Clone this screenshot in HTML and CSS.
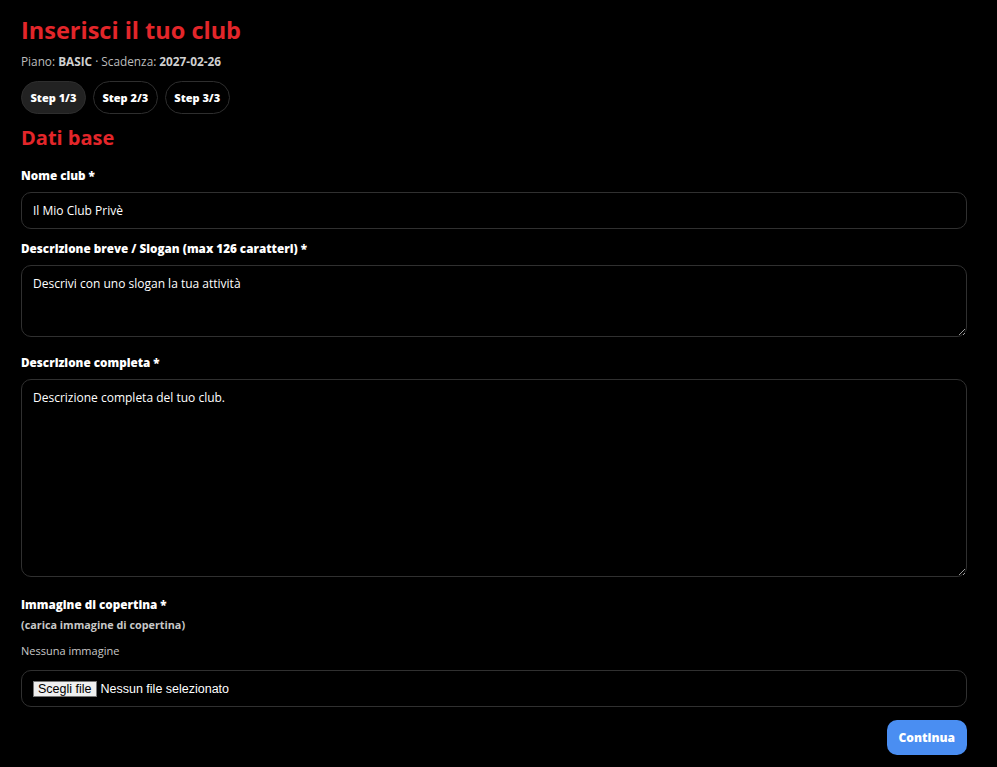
FILE: index.html
```html
<!DOCTYPE html>
<html lang="it">
<head>
<meta charset="utf-8">
<title>Inserisci il tuo club</title>
<link rel="stylesheet" href="styles.css">
</head>
<body>
<main class="page">
  <h1 class="title">Inserisci il tuo club</h1>
  <p class="meta">Piano: <b>BASIC</b> · Scadenza: <b>2027-02-26</b></p>
  <div class="steps">
    <span class="step active">Step 1/3</span>
    <span class="step">Step 2/3</span>
    <span class="step">Step 3/3</span>
  </div>
  <h2 class="section">Dati base</h2>
  <form class="form">
    <label class="label">Nome club *</label>
    <input class="field" type="text" value="Il Mio Club Privè">
    <label class="label after-input">Descrizione breve / Slogan (max 126 caratteri) *</label>
    <textarea class="field area-short" placeholder="Descrivi con uno slogan la tua attività"></textarea>
    <label class="label after-area">Descrizione completa *</label>
    <textarea class="field area-long" placeholder="Descrizione completa del tuo club."></textarea>
    <label class="label label-img">Immagine di copertina *</label>
    <p class="sublabel">(carica immagine di copertina)</p>
    <p class="hint">Nessuna immagine</p>
    <div class="field file-field"><span class="file-btn">Scegli file</span><span class="file-name">Nessun file selezionato</span></div>
    <div class="actions"><button type="button" class="btn">Continua</button></div>
  </form>
</main>
</body>
</html>
```
FILE: styles.css
```css
html, body { margin: 0; padding: 0; background: #000; }
body { font-family: "Open Sans", "Noto Sans", sans-serif; color: #fff; }
.page { width: 946px; padding: 12px 0 0 21px; }
.title { margin: 0; font-size: 23.5px; font-weight: 700; color: #e3262a; line-height: 36px; }
.meta { margin: 5px 0 0; font-size: 11.8px; color: #bdbdbd; line-height: 16px; }
.meta b { font-weight: 700; color: #d0d0d0; }
.steps { display: flex; gap: 7px; margin-top: 12px; }
.step { display: inline-flex; align-items: center; height: 31px; padding: 0 8.5px; border: 1px solid #2e2e2e; border-radius: 17px; font-size: 11px; font-weight: 800; color: #fff; }
.step.active { background: #222; }
.section { margin: 9px 0 0; font-size: 20px; font-weight: 700; color: #e3262a; line-height: 30px; }
.form { display: flex; flex-direction: column; }
.label { display: block; margin-top: 14px; font-size: 11.7px; font-weight: 800; line-height: 17px; color: #fff; }
.label.after-input { margin-top: 11px; }
.label.after-area { margin-top: 17px; }
.label.label-img { margin-top: 19px; }
.field { box-sizing: border-box; width: 946px; margin-top: 8px; background: #000; border: 1px solid #303030; border-radius: 10px; color: #fff; font-family: "Open Sans", "Noto Sans", sans-serif; font-size: 12px; padding: 0 11px; }
input.field { height: 37px; }
textarea.field { padding: 10px 11px; resize: vertical; line-height: 16px; }
textarea.field::placeholder { color: #fff; opacity: 1; }
.area-short { height: 72px; }
.area-long { height: 198px; }
.sublabel { margin: 4px 0 0; font-size: 10.8px; font-weight: 700; color: #c8c8c8; line-height: 16px; }
.hint { margin: 10px 0 0; font-size: 11px; color: #c8c8c8; line-height: 16px; }
.file-field { display: flex; align-items: center; height: 37px; margin-top: 11px; }
.file-btn { font-family: Arial, "Liberation Sans", sans-serif; font-size: 12.5px; color: #000; background: #efefef; border: 1px solid #767676; padding: 0 4px; line-height: 14px; }
.file-name { font-family: Arial, "Liberation Sans", sans-serif; font-size: 12.5px; color: #fff; margin-left: 4px; }
.actions { display: flex; justify-content: flex-end; margin-top: 13px; }
.btn { height: 35px; padding: 0 12px; border: 0; border-radius: 10px; background: #4a8ef2; color: #fff; font-family: "Open Sans", "Noto Sans", sans-serif; font-size: 12px; font-weight: 800; }
```
